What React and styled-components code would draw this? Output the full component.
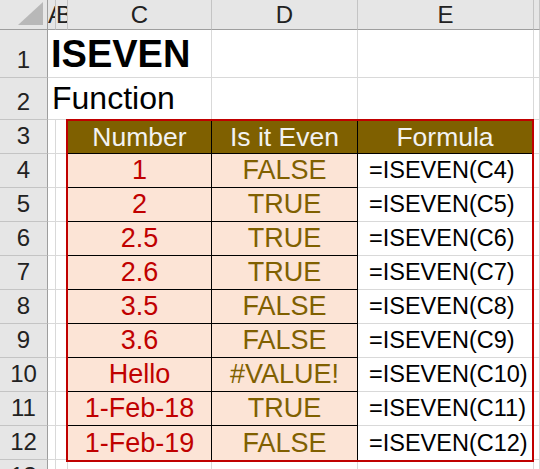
import styled, { createGlobalStyle } from "styled-components"

const GlobalStyle = createGlobalStyle`
    html, body {
        margin: 0;
        padding: 0;
        background: #fff;
    }
`

const Sheet = styled.div`
    display: grid;
    grid-template-columns: 48px 8px 12px 144px 146px 176px 1fr;
    grid-template-rows: 30px 48px 42px repeat(10, 34px) 34px;
    width: 540px;
    height: 469px;
    overflow: hidden;
    font-family: "Liberation Sans", Arial, sans-serif;
    color: #000;
`

const Corner = styled.div`
    background: #e6e6e6;
    border-right: 1px solid #9e9e9e;
    border-bottom: 1px solid #9e9e9e;
    display: flex;
    align-items: flex-end;
    justify-content: flex-end;
    padding: 0 3px 3px 0;
`

const ColHeader = styled.div`
    background: #e6e6e6;
    border-right: 1px solid #c4c4c4;
    border-bottom: 1px solid #9e9e9e;
    display: flex;
    align-items: center;
    justify-content: ${(p) => (p.$clip ? "flex-start" : "center")};
    overflow: hidden;
    white-space: nowrap;
    font-size: 24px;
    color: #222;
`

const RowHeader = styled.div`
    background: #e6e6e6;
    border-right: 1px solid #9e9e9e;
    border-bottom: 1px solid #c4c4c4;
    display: flex;
    align-items: flex-end;
    justify-content: center;
    padding-bottom: 3px;
    font-size: 24px;
    color: #222;
`

const Cell = styled.div`
    border-right: 1px solid #d9d9d9;
    border-bottom: 1px solid #d9d9d9;
`

const Title = styled.div`
    grid-column: 2 / 5;
    border-right: 1px solid #d9d9d9;
    border-bottom: 1px solid #d9d9d9;
    display: flex;
    align-items: flex-end;
    padding: 0 0 ${(p) => (p.$bold ? "1px" : "2px")} ${(p) => (p.$bold ? "3px" : "4px")};
    font-size: ${(p) => (p.$bold ? "38px" : "32px")};
    font-weight: ${(p) => (p.$bold ? 700 : 400)};
    white-space: nowrap;
`

const Table = styled.div`
    grid-column: 4 / 7;
    grid-row: 4 / 14;
    margin: -1px 0 -2px -2px;
    position: relative;
    z-index: 1;
    display: grid;
    grid-template-columns: 144px 146px 1fr;
    grid-template-rows: 33px repeat(9, 34px);
    border: 2px solid #c00000;
    background: #fff;
`

const kinds = {
    head: { bg: "#7f6000", color: "#f2f2f2", size: "26.5px" },
    number: { bg: "#fce4d6", color: "#c00000", size: "27px" },
    result: { bg: "#fce4d6", color: "#806000", size: "27px" },
    formula: { bg: "#fff", color: "#000", size: "23.5px" },
}

const TableCell = styled.div`
    background: ${(p) => kinds[p.$kind].bg};
    color: ${(p) => kinds[p.$kind].color};
    font-size: ${(p) => kinds[p.$kind].size};
    display: flex;
    align-items: center;
    justify-content: ${(p) => (p.$kind === "formula" ? "flex-start" : "center")};
    padding-left: ${(p) => (p.$kind === "formula" ? "11px" : "0")};
    white-space: nowrap;
    border-right: ${(p) => (p.$end ? "none" : "1px solid #000")};
    border-bottom: ${(p) =>
        p.$last ? "none" : p.$kind === "formula" ? "1px solid #d9d9d9" : "1px solid #000"};
`

const rows = [
    ["1", "FALSE"],
    ["2", "TRUE"],
    ["2.5", "TRUE"],
    ["2.6", "TRUE"],
    ["3.5", "FALSE"],
    ["3.6", "FALSE"],
    ["Hello", "#VALUE!"],
    ["1-Feb-18", "TRUE"],
    ["1-Feb-19", "FALSE"],
]

// F is only a sliver at the right edge, its letter is off screen
const columns = ["A", "B", "C", "D", "E", ""]

const App = () => {
    return (
        <>
            <GlobalStyle />
            <Sheet>
                <Corner>
                    <svg width="26" height="24" viewBox="0 0 26 24">
                        <polygon points="25,0 25,23 0,23" fill="#b8b8b8" />
                    </svg>
                </Corner>
                {columns.map((c, i) => (
                    <ColHeader key={i} $clip={c === "A" || c === "B"}>
                        {c}
                    </ColHeader>
                ))}

                <RowHeader>1</RowHeader>
                <Title $bold>ISEVEN</Title>
                <Cell />
                <Cell />
                <Cell />

                <RowHeader>2</RowHeader>
                <Title>Function</Title>
                <Cell />
                <Cell />
                <Cell />

                <Table>
                    <TableCell $kind="head">Number</TableCell>
                    <TableCell $kind="head">Is it Even</TableCell>
                    <TableCell $kind="head" $end>Formula</TableCell>
                    {rows.map(([value, result], i) => {
                        const last = i === rows.length - 1
                        return [
                            <TableCell key={`n${i}`} $kind="number" $last={last}>{value}</TableCell>,
                            <TableCell key={`r${i}`} $kind="result" $last={last}>{result}</TableCell>,
                            <TableCell key={`f${i}`} $kind="formula" $end $last={last}>
                                =ISEVEN(C{i + 4})
                            </TableCell>,
                        ]
                    })}
                </Table>

                {Array.from({ length: 10 }, (_, i) => [
                    <RowHeader key={`h${i}`}>{i + 3}</RowHeader>,
                    <Cell key={`a${i}`} />,
                    <Cell key={`b${i}`} />,
                    <Cell key={`f${i}`} />,
                ])}

                <RowHeader>13</RowHeader>
                {columns.map((c, i) => (
                    <Cell key={i} />
                ))}
            </Sheet>
        </>
    )
}

export default App
